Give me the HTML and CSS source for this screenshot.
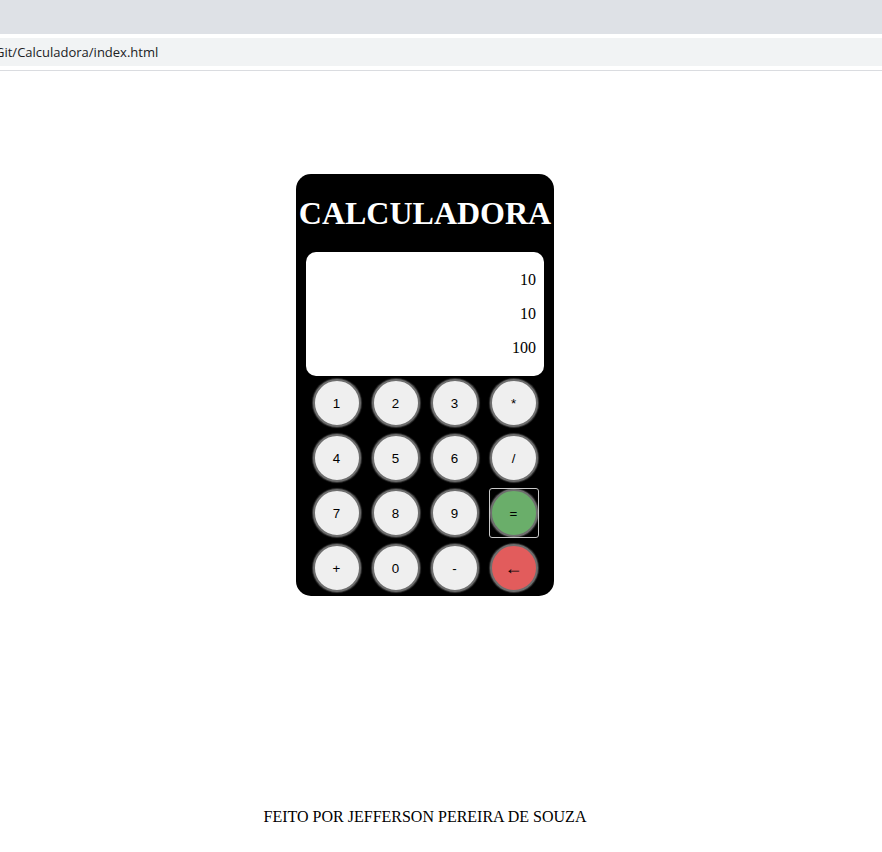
FILE: index.html
```html
<!DOCTYPE html>
<html lang="pt-BR">
<head>
<meta charset="utf-8">
<title>Calculadora</title>
<link rel="stylesheet" href="styles.css">
</head>
<body>
<div class="tabbar"></div>
<div class="address-wrap">
  <div class="address"><span class="url">Git/Calculadora/index.html</span></div>
</div>
<div class="divider"></div>
<main class="page">
  <div class="calc">
    <h1 class="title">CALCULADORA</h1>
    <div class="display">
      <div class="line">10</div>
      <div class="line">10</div>
      <div class="line">100</div>
    </div>
    <div class="keypad">
      <button class="key">1</button>
      <button class="key">2</button>
      <button class="key">3</button>
      <button class="key">*</button>
      <button class="key">4</button>
      <button class="key">5</button>
      <button class="key">6</button>
      <button class="key">/</button>
      <button class="key">7</button>
      <button class="key">8</button>
      <button class="key">9</button>
      <button class="key equals focused">=</button>
      <button class="key">+</button>
      <button class="key">0</button>
      <button class="key">-</button>
      <button class="key back">&larr;</button>
    </div>
  </div>
  <footer class="footer">FEITO POR JEFFERSON PEREIRA DE SOUZA</footer>
</main>
</body>
</html>
```

FILE: styles.css
```css
html, body {
  margin: 0;
  padding: 0;
  background: #ffffff;
}

body {
  font-family: "Liberation Serif", "Times New Roman", serif;
  color: #000;
}

.tabbar {
  height: 34px;
  background: #dee1e6;
}

.address-wrap {
  padding: 4px 0;
  background: #ffffff;
}

.address {
  height: 28px;
  background: #f1f3f4;
  font-family: "Open Sans", "Noto Sans", sans-serif;
  font-size: 13px;
  line-height: 28px;
  color: #202124;
  white-space: nowrap;
  overflow: hidden;
}

.url {
  display: inline-block;
  margin-left: -5px;
}

.divider {
  height: 1px;
  background: #dadce0;
}

.page {
  width: 834px;
  margin-left: 8px;
  padding-top: 103px;
}

.calc {
  display: flow-root;
  width: 258px;
  margin: 0 auto;
  background: #000;
  border-radius: 15px;
  padding-bottom: 4px;
}

.title {
  margin: 21px 0 20px;
  font-size: 32px;
  font-weight: bold;
  color: #fff;
  text-align: center;
  white-space: nowrap;
}

.display {
  margin: 0 10px;
  background: #fff;
  border-radius: 10px;
  padding: 11px 8px;
}

.line {
  font-size: 16px;
  line-height: 34px;
  text-align: right;
}

.keypad {
  display: grid;
  grid-template-columns: repeat(4, 48px);
  grid-auto-rows: 48px;
  column-gap: 11px;
  row-gap: 7px;
  justify-content: center;
  margin-top: 3px;
}

.key {
  position: relative;
  width: 48px;
  height: 48px;
  padding: 0;
  border: 2px solid #6e6e6e;
  border-radius: 50%;
  background: #efefef;
  box-shadow: 0 0 1px 1px #3a3a3a;
  font-family: "Liberation Sans", Arial, sans-serif;
  font-size: 13.33px;
  color: #000;
}

.equals {
  background: #6aae6a;
}

.back {
  background: #e25c5c;
  font-size: 18px;
}

.focused::after {
  content: "";
  position: absolute;
  top: -3px;
  left: -3px;
  right: -3px;
  bottom: -3px;
  border: 1px solid #c8c8c8;
  border-radius: 3px;
}

.footer {
  margin-top: 212px;
  text-align: center;
  font-size: 16px;
}
```
